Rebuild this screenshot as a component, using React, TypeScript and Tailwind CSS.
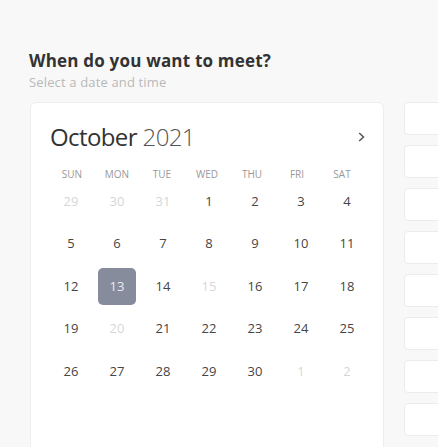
import React from "react";

const headers = ["SUN", "MON", "TUE", "WED", "THU", "FRI", "SAT"];

type Day = { n: number; muted?: boolean; selected?: boolean };

const days: Day[] = [
  { n: 29, muted: true }, { n: 30, muted: true }, { n: 31, muted: true }, { n: 1 }, { n: 2 }, { n: 3 }, { n: 4 },
  { n: 5 }, { n: 6 }, { n: 7 }, { n: 8 }, { n: 9 }, { n: 10 }, { n: 11 },
  { n: 12 }, { n: 13, selected: true }, { n: 14 }, { n: 15, muted: true }, { n: 16 }, { n: 17 }, { n: 18 },
  { n: 19 }, { n: 20, muted: true }, { n: 21 }, { n: 22 }, { n: 23 }, { n: 24 }, { n: 25 },
  { n: 26 }, { n: 27 }, { n: 28 }, { n: 29 }, { n: 30 }, { n: 1, muted: true }, { n: 2, muted: true },
];

export default function App() {
  return (
    <div className="w-[438px] h-[447px] overflow-hidden bg-[#f8f8f8] font-['Open_Sans',sans-serif]">
      <div className="pl-[29px] pt-[50px]">
        <h1 className="text-[17px] leading-[22px] font-bold tracking-[0.2px] text-[#333333]">When do you want to meet?</h1>
        <p className="mt-[1px] text-[13px] leading-[18px] tracking-[0.15px] text-[#b8b8b8]">Select a date and time</p>
      </div>
      <div className="flex gap-[20px] pl-[30px] mt-[11px]">
        <div className="w-[354px] h-[400px] shrink-0 rounded-[6px] border border-[#eeeeee] bg-white pt-[18px]">
          <div className="flex items-center justify-between pl-[19px] pr-[18px] h-[32px]">
            <div className="text-[24px] leading-[32px] tracking-[-0.6px] text-[#333333]">
              October <span className="font-light text-[#555555]">2021</span>
            </div>
            <svg width="7" height="10" viewBox="0 0 7 10" fill="none">
              <path d="M1.2 1 L5.5 5 L1.2 9" stroke="#555555" strokeWidth="1.5" />
            </svg>
          </div>
          <div className="ml-[18.5px] mt-[13.4px] grid grid-cols-[repeat(7,45px)] h-[16px]">
            {headers.map((h) => (
              <div key={h} className="text-center text-[10px] leading-[16px] text-[#999999]">
                {h}
              </div>
            ))}
          </div>
          <div className="ml-[17px] grid grid-cols-[repeat(7,46px)] auto-rows-[38px] gap-y-[4.5px]">
            {days.map((d, i) => (
              <div key={i} className="flex items-center justify-center">
                {d.selected ? (
                  <div className="w-[38px] h-[37px] rounded-[5px] bg-[#878c9d] flex items-center justify-center text-[13px] text-[#e8eaf0]">
                    {d.n}
                  </div>
                ) : (
                  <span className={d.muted ? "text-[13px] text-[#d6d6d6]" : "text-[13px] text-[#454545]"}>{d.n}</span>
                )}
              </div>
            ))}
          </div>
        </div>
        <div className="flex flex-col gap-[10px] shrink-0">
          {Array.from({ length: 8 }).map((_, i) => (
            <div key={i} className="w-[120px] h-[33px] rounded-[4px] border border-[#ececec] bg-white" />
          ))}
        </div>
      </div>
    </div>
  );
}
